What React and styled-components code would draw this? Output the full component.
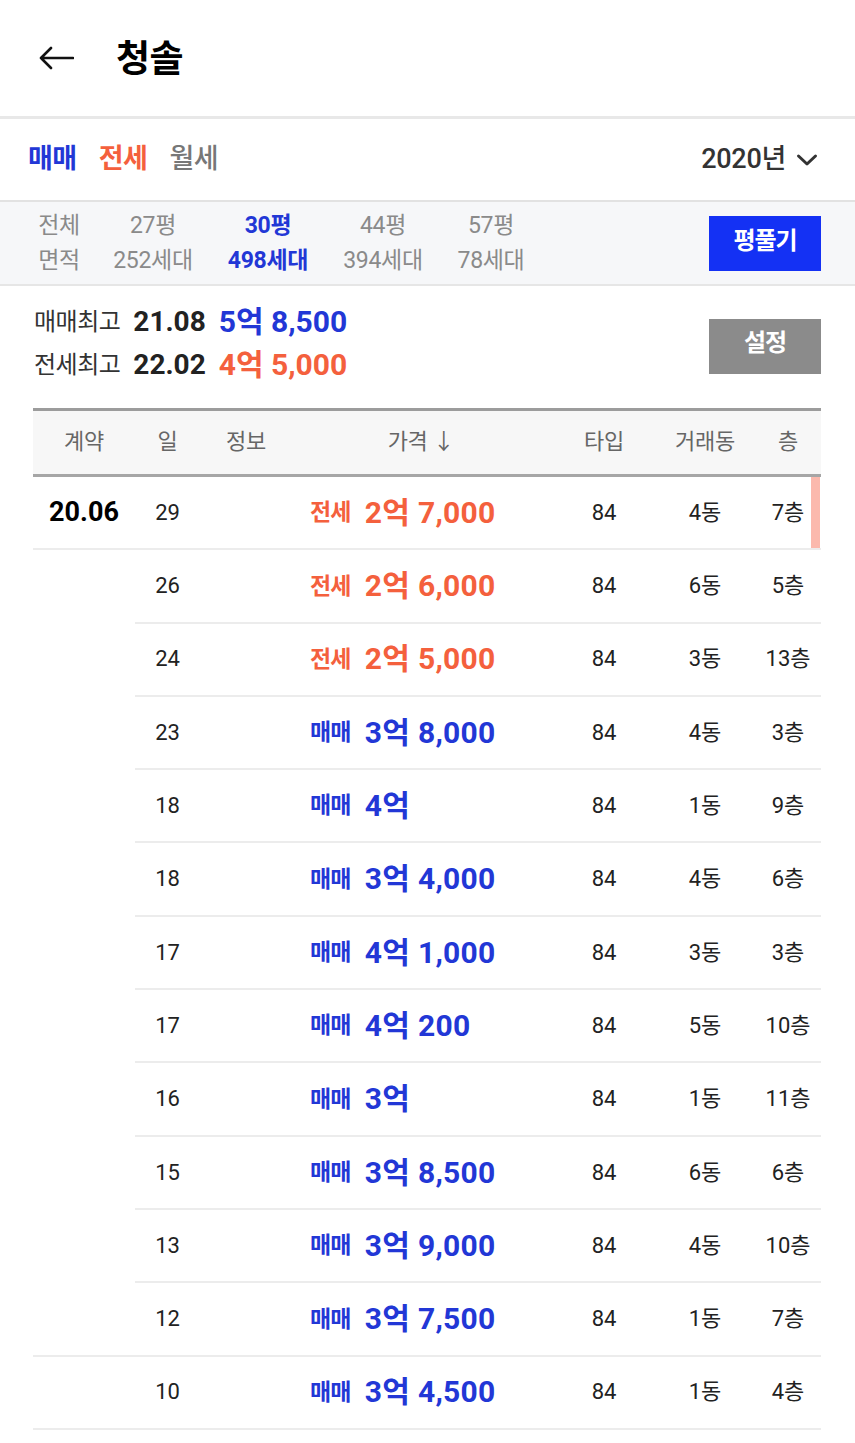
import React from "react";
import styled, { createGlobalStyle } from "styled-components";

const BLUE = "#2237d6";
const ORANGE = "#f4603d";

const GlobalStyle = createGlobalStyle`
  * { box-sizing: border-box; }
  html, body { margin: 0; padding: 0; background: #fff; }
  body { font-family: Roboto, "Noto Sans CJK KR", sans-serif; color: #222; line-height: 1.25; }
`;

const Page = styled.div`
  width: 855px;
  background: #fff;
`;

const Header = styled.header`
  height: 119px;
  display: flex;
  align-items: center;
  padding-left: 38px;
  gap: 41px;
  border-bottom: 3px solid #e8e8e8;
`;

const BackButton = styled.button`
  border: 0;
  background: none;
  padding: 0;
  width: 37px;
  height: 26px;
  display: flex;
  align-items: center;
`;

const Title = styled.h1`
  margin: 4px 0 0;
  font-size: 37px;
  line-height: 1.2;
  font-weight: 700;
  letter-spacing: -0.5px;
  color: #000;
`;

const TabBar = styled.div`
  height: 83px;
  display: flex;
  align-items: center;
  justify-content: space-between;
  padding: 0 37px 0 28px;
  border-bottom: 2px solid #e2e2e2;
`;

const Tabs = styled.div`
  display: flex;
  gap: 22px;
`;

const Tab = styled.span`
  font-size: 27px;
  letter-spacing: -0.5px;
  font-weight: ${(p) => (p.$active ? 700 : 500)};
  color: ${(p) => p.$color};
`;

const YearSelect = styled.div`
  display: flex;
  align-items: center;
  gap: 10px;
  font-size: 27px;
  font-weight: 500;
  color: #333;
  letter-spacing: -0.3px;
`;

const AreaBar = styled.div`
  height: 84px;
  display: flex;
  align-items: center;
  justify-content: space-between;
  padding: 0 34px 0 36px;
  background: #f6f7f9;
  border-bottom: 2px solid #e6e6e6;
`;

const AreaList = styled.div`
  display: flex;
  gap: 31px;
`;

const AreaCol = styled.div`
  width: ${(p) => p.$w}px;
  margin-right: ${(p) => p.$mr || 0}px;
  display: flex;
  flex-direction: column;
  align-items: center;
  font-size: 23px;
  line-height: 35px;
  letter-spacing: -0.3px;
  color: ${(p) => (p.$active ? BLUE : "#8a8a8a")};
  font-weight: ${(p) => (p.$active ? 700 : 400)};
  white-space: nowrap;
`;

const ActionButton = styled.button`
  width: 112px;
  height: 55px;
  border: 0;
  background: ${(p) => p.$bg};
  color: #fff;
  font-family: Roboto, "Noto Sans CJK KR", sans-serif;
  font-size: 24px;
  line-height: 1.2;
  font-weight: 700;
  letter-spacing: -1px;
  padding: 0 0 ${(p) => p.$pb || 0}px;
`;

const Summary = styled.div`
  height: 122px;
  display: flex;
  justify-content: space-between;
  align-items: flex-start;
  padding: 14px 34px 0 34px;
`;

const SummaryLines = styled.div`
  display: flex;
  flex-direction: column;
`;

const SummaryLine = styled.div`
  height: 43px;
  display: flex;
  align-items: center;
  gap: 13px;
`;

const SummaryLabel = styled.span`
  font-size: 24px;
  color: #333;
  letter-spacing: -0.5px;
`;

const SummaryDate = styled.span`
  font-size: 28px;
  font-weight: 700;
  color: #222;
`;

const SummaryPrice = styled.span`
  font-size: 30px;
  font-weight: 700;
  color: ${(p) => p.$color};
`;

const SideButtonWrap = styled.div`
  margin-top: 19px;
`;

const Table = styled.div`
  margin: 0 34px 0 33px;
  border-top: 3px solid #9c9c9c;
`;

const COLS = "102px 65px 92px 1fr 88px 114px 59px";

const HeadRow = styled.div`
  display: grid;
  grid-template-columns: ${COLS};
  height: 66px;
  background: #f7f7f7;
  border-bottom: 3px solid #a6a6a6;
`;

const HeadCell = styled.div`
  display: flex;
  align-items: center;
  justify-content: center;
  font-size: 22px;
  color: #666;
  letter-spacing: -0.3px;
  padding-right: ${(p) => p.$pr || 0}px;
  padding-bottom: 2px;
`;

const Body = styled.div`
  position: relative;
`;

const Row = styled.div`
  display: grid;
  grid-template-columns: ${COLS};
`;

const Cell = styled.div`
  height: 73.3px;
  display: flex;
  align-items: center;
  justify-content: ${(p) => (p.$left ? "flex-start" : "center")};
  padding-left: ${(p) => p.$pl || 0}px;
  padding-right: ${(p) => p.$pr || 0}px;
  border-bottom: 2px solid ${(p) => (p.$noLine ? "transparent" : "#ececec")};
  font-size: 22px;
  color: #222;
  white-space: nowrap;
`;

const DateText = styled.span`
  font-size: 27px;
  font-weight: 700;
  color: #000;
`;

const DealLabel = styled.span`
  font-size: 23px;
  font-weight: 700;
  letter-spacing: -0.8px;
  color: ${(p) => p.$color};
  margin-right: 14px;
  padding-top: 2px;
`;

const PriceText = styled.span`
  font-size: 30px;
  font-weight: 700;
  letter-spacing: 0.3px;
  color: ${(p) => p.$color};
`;

const ScrollThumb = styled.div`
  position: absolute;
  top: 0;
  right: 1px;
  width: 9px;
  height: 71px;
  background: #fbb9ad;
`;

const BackArrow = () => (
  <svg width="36" height="24" viewBox="0 0 36 24" fill="none">
    <path d="M3 12H35M13 2L3 12L13 22" stroke="#111" strokeWidth="2.6" strokeLinecap="round" strokeLinejoin="round" />
  </svg>
);

const Chevron = () => (
  <svg width="22" height="14" viewBox="0 0 22 14" fill="none">
    <path d="M2.5 3L11 11L19.5 3" stroke="#333" strokeWidth="3" strokeLinecap="round" strokeLinejoin="round" />
  </svg>
);

const areas = [
  { top: "전체", bottom: "면적", w: 46, mr: -2 },
  { top: "27평", bottom: "252세대", w: 84 },
  { top: "30평", bottom: "498세대", w: 84, active: true },
  { top: "44평", bottom: "394세대", w: 84 },
  { top: "57평", bottom: "78세대", w: 70 },
];

const rows = [
  { date: "20.06", day: "29", type: "전세", price: "2억 7,000", dong: "4동", floor: "7층", full: true },
  { day: "26", type: "전세", price: "2억 6,000", dong: "6동", floor: "5층" },
  { day: "24", type: "전세", price: "2억 5,000", dong: "3동", floor: "13층" },
  { day: "23", type: "매매", price: "3억 8,000", dong: "4동", floor: "3층" },
  { day: "18", type: "매매", price: "4억", dong: "1동", floor: "9층" },
  { day: "18", type: "매매", price: "3억 4,000", dong: "4동", floor: "6층" },
  { day: "17", type: "매매", price: "4억 1,000", dong: "3동", floor: "3층" },
  { day: "17", type: "매매", price: "4억 200", dong: "5동", floor: "10층" },
  { day: "16", type: "매매", price: "3억", dong: "1동", floor: "11층" },
  { day: "15", type: "매매", price: "3억 8,500", dong: "6동", floor: "6층" },
  { day: "13", type: "매매", price: "3억 9,000", dong: "4동", floor: "10층" },
  { day: "12", type: "매매", price: "3억 7,500", dong: "1동", floor: "7층", full: true },
  { day: "10", type: "매매", price: "3억 4,500", dong: "1동", floor: "4층", full: true },
];

export default function App() {
  return (
    <Page>
      <GlobalStyle />
      <Header>
        <BackButton aria-label="뒤로">
          <BackArrow />
        </BackButton>
        <Title>청솔</Title>
      </Header>

      <TabBar>
        <Tabs>
          <Tab $active $color={BLUE}>매매</Tab>
          <Tab $active $color={ORANGE}>전세</Tab>
          <Tab $color="#777">월세</Tab>
        </Tabs>
        <YearSelect>
          2020년
          <Chevron />
        </YearSelect>
      </TabBar>

      <AreaBar>
        <AreaList>
          {areas.map((a) => (
            <AreaCol key={a.top} $w={a.w} $mr={a.mr} $active={a.active}>
              <span>{a.top}</span>
              <span>{a.bottom}</span>
            </AreaCol>
          ))}
        </AreaList>
        <ActionButton $bg="#1431f4" $pb={4}>평풀기</ActionButton>
      </AreaBar>

      <Summary>
        <SummaryLines>
          <SummaryLine>
            <SummaryLabel>매매최고</SummaryLabel>
            <SummaryDate>21.08</SummaryDate>
            <SummaryPrice $color={BLUE}>5억 8,500</SummaryPrice>
          </SummaryLine>
          <SummaryLine>
            <SummaryLabel>전세최고</SummaryLabel>
            <SummaryDate>22.02</SummaryDate>
            <SummaryPrice $color={ORANGE}>4억 5,000</SummaryPrice>
          </SummaryLine>
        </SummaryLines>
        <SideButtonWrap>
          <ActionButton $bg="#8b8b8b" $pb={6}>설정</ActionButton>
        </SideButtonWrap>
      </Summary>

      <Table>
        <HeadRow>
          <HeadCell>계약</HeadCell>
          <HeadCell>일</HeadCell>
          <HeadCell>정보</HeadCell>
          <HeadCell $pr={10}>가격 ↓</HeadCell>
          <HeadCell>타입</HeadCell>
          <HeadCell>거래동</HeadCell>
          <HeadCell $pr={7}>층</HeadCell>
        </HeadRow>
        <Body>
          {rows.map((r, i) => {
            const color = r.type === "전세" ? ORANGE : BLUE;
            return (
              <Row key={i}>
                <Cell $noLine={!r.full}>{r.date && <DateText>{r.date}</DateText>}</Cell>
                <Cell>{r.day}</Cell>
                <Cell />
                <Cell $left $pl={18}>
                  <DealLabel $color={color}>{r.type}</DealLabel>
                  <PriceText $color={color}>{r.price}</PriceText>
                </Cell>
                <Cell>84</Cell>
                <Cell>{r.dong}</Cell>
                <Cell $pr={7}>{r.floor}</Cell>
              </Row>
            );
          })}
          <ScrollThumb />
        </Body>
      </Table>
    </Page>
  );
}
